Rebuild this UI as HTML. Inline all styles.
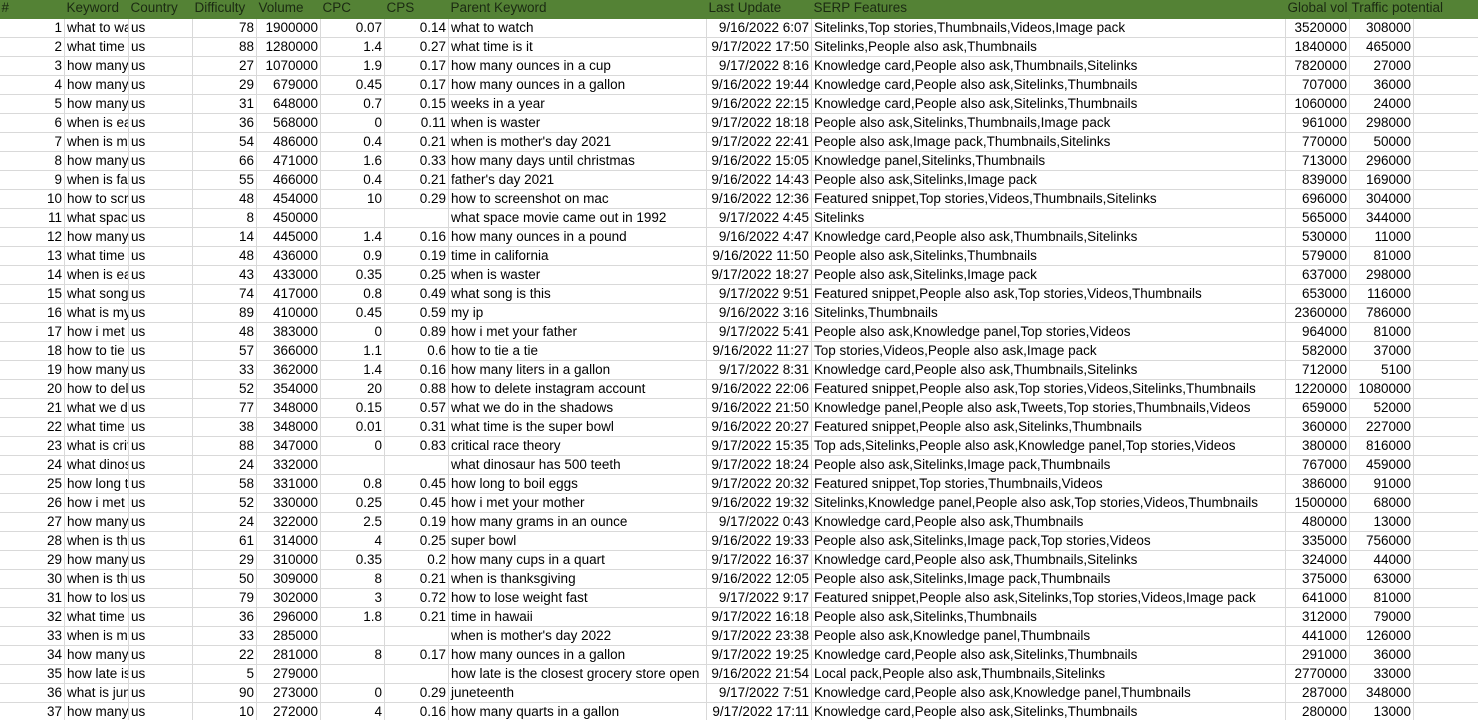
<!DOCTYPE html>
<html><head><meta charset="utf-8"><style>
html,body{margin:0;padding:0;background:#fff;width:1478px;height:720px;overflow:hidden}
table{border-collapse:collapse;table-layout:fixed;width:1480px;font-family:"Liberation Sans",sans-serif;font-size:13.5px;color:#000;margin-top:-1px;margin-left:-1px}
td{height:18px;padding:0 2px;border:1px solid #d9d9d9;white-space:nowrap;overflow:hidden;line-height:18px;box-sizing:border-box;text-align:right}
td.l{text-align:left}
tr.h td{background:#548235;border:none;border-bottom:1px solid #548235;height:19px;color:#1b2a12;text-align:left;overflow:visible}
</style></head><body>
<table>
<colgroup><col style="width:65px"><col style="width:64px"><col style="width:64px"><col style="width:64px"><col style="width:64px"><col style="width:64px"><col style="width:64px"><col style="width:258px"><col style="width:105px"><col style="width:474px"><col style="width:64px"><col style="width:64px"><col style="width:66px"></colgroup>
<tr class="h"><td>#</td><td>Keyword</td><td>Country</td><td>Difficulty</td><td>Volume</td><td>CPC</td><td>CPS</td><td>Parent Keyword</td><td>Last Update</td><td>SERP Features</td><td>Global vol</td><td>Traffic potential</td><td></td></tr>
<tr><td>1</td><td class="l">what to watch</td><td class="l">us</td><td>78</td><td>1900000</td><td>0.07</td><td>0.14</td><td class="l">what to watch</td><td>9/16/2022 6:07</td><td class="l">Sitelinks,Top stories,Thumbnails,Videos,Image pack</td><td>3520000</td><td>308000</td><td></td></tr>
<tr><td>2</td><td class="l">what time is it</td><td class="l">us</td><td>88</td><td>1280000</td><td>1.4</td><td>0.27</td><td class="l">what time is it</td><td>9/17/2022 17:50</td><td class="l">Sitelinks,People also ask,Thumbnails</td><td>1840000</td><td>465000</td><td></td></tr>
<tr><td>3</td><td class="l">how many ounces</td><td class="l">us</td><td>27</td><td>1070000</td><td>1.9</td><td>0.17</td><td class="l">how many ounces in a cup</td><td>9/17/2022 8:16</td><td class="l">Knowledge card,People also ask,Thumbnails,Sitelinks</td><td>7820000</td><td>27000</td><td></td></tr>
<tr><td>4</td><td class="l">how many ounces</td><td class="l">us</td><td>29</td><td>679000</td><td>0.45</td><td>0.17</td><td class="l">how many ounces in a gallon</td><td>9/16/2022 19:44</td><td class="l">Knowledge card,People also ask,Sitelinks,Thumbnails</td><td>707000</td><td>36000</td><td></td></tr>
<tr><td>5</td><td class="l">how many weeks</td><td class="l">us</td><td>31</td><td>648000</td><td>0.7</td><td>0.15</td><td class="l">weeks in a year</td><td>9/16/2022 22:15</td><td class="l">Knowledge card,People also ask,Sitelinks,Thumbnails</td><td>1060000</td><td>24000</td><td></td></tr>
<tr><td>6</td><td class="l">when is easter</td><td class="l">us</td><td>36</td><td>568000</td><td>0</td><td>0.11</td><td class="l">when is waster</td><td>9/17/2022 18:18</td><td class="l">People also ask,Sitelinks,Thumbnails,Image pack</td><td>961000</td><td>298000</td><td></td></tr>
<tr><td>7</td><td class="l">when is mother's</td><td class="l">us</td><td>54</td><td>486000</td><td>0.4</td><td>0.21</td><td class="l">when is mother's day 2021</td><td>9/17/2022 22:41</td><td class="l">People also ask,Image pack,Thumbnails,Sitelinks</td><td>770000</td><td>50000</td><td></td></tr>
<tr><td>8</td><td class="l">how many days</td><td class="l">us</td><td>66</td><td>471000</td><td>1.6</td><td>0.33</td><td class="l">how many days until christmas</td><td>9/16/2022 15:05</td><td class="l">Knowledge panel,Sitelinks,Thumbnails</td><td>713000</td><td>296000</td><td></td></tr>
<tr><td>9</td><td class="l">when is father's</td><td class="l">us</td><td>55</td><td>466000</td><td>0.4</td><td>0.21</td><td class="l">father's day 2021</td><td>9/16/2022 14:43</td><td class="l">People also ask,Sitelinks,Image pack</td><td>839000</td><td>169000</td><td></td></tr>
<tr><td>10</td><td class="l">how to screenshot</td><td class="l">us</td><td>48</td><td>454000</td><td>10</td><td>0.29</td><td class="l">how to screenshot on mac</td><td>9/16/2022 12:36</td><td class="l">Featured snippet,Top stories,Videos,Thumbnails,Sitelinks</td><td>696000</td><td>304000</td><td></td></tr>
<tr><td>11</td><td class="l">what space movie</td><td class="l">us</td><td>8</td><td>450000</td><td></td><td></td><td class="l">what space movie came out in 1992</td><td>9/17/2022 4:45</td><td class="l">Sitelinks</td><td>565000</td><td>344000</td><td></td></tr>
<tr><td>12</td><td class="l">how many ounces</td><td class="l">us</td><td>14</td><td>445000</td><td>1.4</td><td>0.16</td><td class="l">how many ounces in a pound</td><td>9/16/2022 4:47</td><td class="l">Knowledge card,People also ask,Thumbnails,Sitelinks</td><td>530000</td><td>11000</td><td></td></tr>
<tr><td>13</td><td class="l">what time is it</td><td class="l">us</td><td>48</td><td>436000</td><td>0.9</td><td>0.19</td><td class="l">time in california</td><td>9/16/2022 11:50</td><td class="l">People also ask,Sitelinks,Thumbnails</td><td>579000</td><td>81000</td><td></td></tr>
<tr><td>14</td><td class="l">when is easter</td><td class="l">us</td><td>43</td><td>433000</td><td>0.35</td><td>0.25</td><td class="l">when is waster</td><td>9/17/2022 18:27</td><td class="l">People also ask,Sitelinks,Image pack</td><td>637000</td><td>298000</td><td></td></tr>
<tr><td>15</td><td class="l">what song is this</td><td class="l">us</td><td>74</td><td>417000</td><td>0.8</td><td>0.49</td><td class="l">what song is this</td><td>9/17/2022 9:51</td><td class="l">Featured snippet,People also ask,Top stories,Videos,Thumbnails</td><td>653000</td><td>116000</td><td></td></tr>
<tr><td>16</td><td class="l">what is my ip</td><td class="l">us</td><td>89</td><td>410000</td><td>0.45</td><td>0.59</td><td class="l">my ip</td><td>9/16/2022 3:16</td><td class="l">Sitelinks,Thumbnails</td><td>2360000</td><td>786000</td><td></td></tr>
<tr><td>17</td><td class="l">how i met your</td><td class="l">us</td><td>48</td><td>383000</td><td>0</td><td>0.89</td><td class="l">how i met your father</td><td>9/17/2022 5:41</td><td class="l">People also ask,Knowledge panel,Top stories,Videos</td><td>964000</td><td>81000</td><td></td></tr>
<tr><td>18</td><td class="l">how to tie a tie</td><td class="l">us</td><td>57</td><td>366000</td><td>1.1</td><td>0.6</td><td class="l">how to tie a tie</td><td>9/16/2022 11:27</td><td class="l">Top stories,Videos,People also ask,Image pack</td><td>582000</td><td>37000</td><td></td></tr>
<tr><td>19</td><td class="l">how many liters</td><td class="l">us</td><td>33</td><td>362000</td><td>1.4</td><td>0.16</td><td class="l">how many liters in a gallon</td><td>9/17/2022 8:31</td><td class="l">Knowledge card,People also ask,Thumbnails,Sitelinks</td><td>712000</td><td>5100</td><td></td></tr>
<tr><td>20</td><td class="l">how to delete</td><td class="l">us</td><td>52</td><td>354000</td><td>20</td><td>0.88</td><td class="l">how to delete instagram account</td><td>9/16/2022 22:06</td><td class="l">Featured snippet,People also ask,Top stories,Videos,Sitelinks,Thumbnails</td><td>1220000</td><td>1080000</td><td></td></tr>
<tr><td>21</td><td class="l">what we do in</td><td class="l">us</td><td>77</td><td>348000</td><td>0.15</td><td>0.57</td><td class="l">what we do in the shadows</td><td>9/16/2022 21:50</td><td class="l">Knowledge panel,People also ask,Tweets,Top stories,Thumbnails,Videos</td><td>659000</td><td>52000</td><td></td></tr>
<tr><td>22</td><td class="l">what time is the</td><td class="l">us</td><td>38</td><td>348000</td><td>0.01</td><td>0.31</td><td class="l">what time is the super bowl</td><td>9/16/2022 20:27</td><td class="l">Featured snippet,People also ask,Sitelinks,Thumbnails</td><td>360000</td><td>227000</td><td></td></tr>
<tr><td>23</td><td class="l">what is critical</td><td class="l">us</td><td>88</td><td>347000</td><td>0</td><td>0.83</td><td class="l">critical race theory</td><td>9/17/2022 15:35</td><td class="l">Top ads,Sitelinks,People also ask,Knowledge panel,Top stories,Videos</td><td>380000</td><td>816000</td><td></td></tr>
<tr><td>24</td><td class="l">what dinosaur</td><td class="l">us</td><td>24</td><td>332000</td><td></td><td></td><td class="l">what dinosaur has 500 teeth</td><td>9/17/2022 18:24</td><td class="l">People also ask,Sitelinks,Image pack,Thumbnails</td><td>767000</td><td>459000</td><td></td></tr>
<tr><td>25</td><td class="l">how long to boil</td><td class="l">us</td><td>58</td><td>331000</td><td>0.8</td><td>0.45</td><td class="l">how long to boil eggs</td><td>9/17/2022 20:32</td><td class="l">Featured snippet,Top stories,Thumbnails,Videos</td><td>386000</td><td>91000</td><td></td></tr>
<tr><td>26</td><td class="l">how i met your</td><td class="l">us</td><td>52</td><td>330000</td><td>0.25</td><td>0.45</td><td class="l">how i met your mother</td><td>9/16/2022 19:32</td><td class="l">Sitelinks,Knowledge panel,People also ask,Top stories,Videos,Thumbnails</td><td>1500000</td><td>68000</td><td></td></tr>
<tr><td>27</td><td class="l">how many grams</td><td class="l">us</td><td>24</td><td>322000</td><td>2.5</td><td>0.19</td><td class="l">how many grams in an ounce</td><td>9/17/2022 0:43</td><td class="l">Knowledge card,People also ask,Thumbnails</td><td>480000</td><td>13000</td><td></td></tr>
<tr><td>28</td><td class="l">when is the super</td><td class="l">us</td><td>61</td><td>314000</td><td>4</td><td>0.25</td><td class="l">super bowl</td><td>9/16/2022 19:33</td><td class="l">People also ask,Sitelinks,Image pack,Top stories,Videos</td><td>335000</td><td>756000</td><td></td></tr>
<tr><td>29</td><td class="l">how many cups</td><td class="l">us</td><td>29</td><td>310000</td><td>0.35</td><td>0.2</td><td class="l">how many cups in a quart</td><td>9/17/2022 16:37</td><td class="l">Knowledge card,People also ask,Thumbnails,Sitelinks</td><td>324000</td><td>44000</td><td></td></tr>
<tr><td>30</td><td class="l">when is thanksgiving</td><td class="l">us</td><td>50</td><td>309000</td><td>8</td><td>0.21</td><td class="l">when is thanksgiving</td><td>9/16/2022 12:05</td><td class="l">People also ask,Sitelinks,Image pack,Thumbnails</td><td>375000</td><td>63000</td><td></td></tr>
<tr><td>31</td><td class="l">how to lose</td><td class="l">us</td><td>79</td><td>302000</td><td>3</td><td>0.72</td><td class="l">how to lose weight fast</td><td>9/17/2022 9:17</td><td class="l">Featured snippet,People also ask,Sitelinks,Top stories,Videos,Image pack</td><td>641000</td><td>81000</td><td></td></tr>
<tr><td>32</td><td class="l">what time is it</td><td class="l">us</td><td>36</td><td>296000</td><td>1.8</td><td>0.21</td><td class="l">time in hawaii</td><td>9/17/2022 16:18</td><td class="l">People also ask,Sitelinks,Thumbnails</td><td>312000</td><td>79000</td><td></td></tr>
<tr><td>33</td><td class="l">when is mother's</td><td class="l">us</td><td>33</td><td>285000</td><td></td><td></td><td class="l">when is mother's day 2022</td><td>9/17/2022 23:38</td><td class="l">People also ask,Knowledge panel,Thumbnails</td><td>441000</td><td>126000</td><td></td></tr>
<tr><td>34</td><td class="l">how many ounces</td><td class="l">us</td><td>22</td><td>281000</td><td>8</td><td>0.17</td><td class="l">how many ounces in a gallon</td><td>9/17/2022 19:25</td><td class="l">Knowledge card,People also ask,Sitelinks,Thumbnails</td><td>291000</td><td>36000</td><td></td></tr>
<tr><td>35</td><td class="l">how late is the</td><td class="l">us</td><td>5</td><td>279000</td><td></td><td></td><td class="l">how late is the closest grocery store open</td><td>9/16/2022 21:54</td><td class="l">Local pack,People also ask,Thumbnails,Sitelinks</td><td>2770000</td><td>33000</td><td></td></tr>
<tr><td>36</td><td class="l">what is juneteenth</td><td class="l">us</td><td>90</td><td>273000</td><td>0</td><td>0.29</td><td class="l">juneteenth</td><td>9/17/2022 7:51</td><td class="l">Knowledge card,People also ask,Knowledge panel,Thumbnails</td><td>287000</td><td>348000</td><td></td></tr>
<tr><td>37</td><td class="l">how many quarts</td><td class="l">us</td><td>10</td><td>272000</td><td>4</td><td>0.16</td><td class="l">how many quarts in a gallon</td><td>9/17/2022 17:11</td><td class="l">Knowledge card,People also ask,Sitelinks,Thumbnails</td><td>280000</td><td>13000</td><td></td></tr>
</table>
</body></html>
